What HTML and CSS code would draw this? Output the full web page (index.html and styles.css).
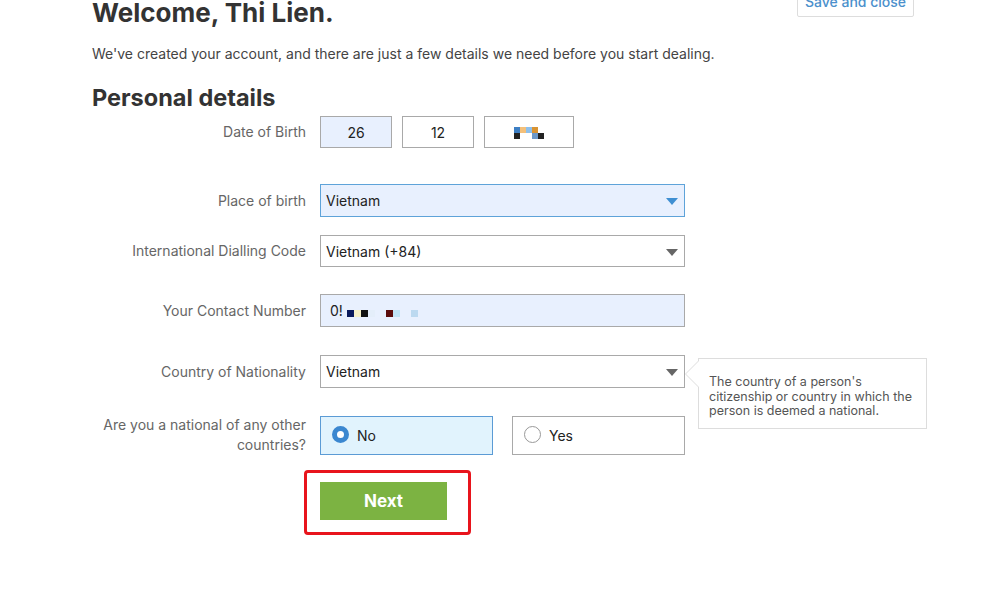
FILE: index.html
```html
<!DOCTYPE html>
<html lang="en">
<head>
<meta charset="utf-8">
<title>Personal details</title>
<link rel="stylesheet" href="styles.css">
</head>
<body>
<div class="page">
  <header class="top">
    <h1 class="title">Welcome, Thi Lien.</h1>
    <button class="save-btn">Save and close</button>
  </header>
  <p class="intro">We've created your account, and there are just a few details we need before you start dealing.</p>
  <h2 class="section">Personal details</h2>

  <div class="form">
    <div class="row row-dob">
      <div class="label">Date of Birth</div>
      <div class="control dob">
        <div class="box box-day">26</div>
        <div class="box">12</div>
        <div class="box box-year">
          <span class="px-grid">
            <span class="px" style="background:#3d7fc4"></span><span class="px" style="background:#f4c07a"></span><span class="px" style="background:#8ec0ec"></span><span class="px" style="background:#d99432"></span><span class="px px-empty"></span>
            <span class="px" style="background:#222"></span><span class="px px-empty"></span><span class="px px-empty"></span><span class="px" style="background:#6c98c8"></span><span class="px" style="background:#222"></span>
          </span>
        </div>
      </div>
    </div>

    <div class="row row-place">
      <div class="label">Place of birth</div>
      <div class="control">
        <div class="select select-active">Vietnam<span class="arrow arrow-blue"></span></div>
      </div>
    </div>

    <div class="row row-code">
      <div class="label">International Dialling Code</div>
      <div class="control">
        <div class="select select-short">Vietnam (+84)<span class="arrow"></span></div>
      </div>
    </div>

    <div class="row">
      <div class="label">Your Contact Number</div>
      <div class="control">
        <div class="select select-filled">0!<span class="phone-px"><span class="px" style="background:#0a1a5c"></span><span class="px" style="background:#f6f0c8"></span><span class="px" style="background:#111"></span><span class="px" style="background:#e4eefa"></span><span class="px px-gap" style="background:#5a0c0c"></span><span class="px" style="background:#bfe3f6"></span><span class="px px-gap" style="background:#bcd9f0"></span></span></div>
      </div>
    </div>

    <div class="row row-nat">
      <div class="label">Country of Nationality</div>
      <div class="control control-tip">
        <div class="select">Vietnam<span class="arrow"></span></div>
        <div class="tooltip">The country of a person's citizenship or country in which the person is deemed a national.</div>
      </div>
    </div>

    <div class="row row-radio">
      <div class="label label-multi">Are you a national of any other countries?</div>
      <div class="control radios">
        <div class="radio radio-on"><span class="dot dot-on"></span>No</div>
        <div class="radio"><span class="dot"></span>Yes</div>
      </div>
    </div>

    <div class="next-wrap">
      <button class="next-btn">Next</button>
    </div>
  </div>
</div>
</body>
</html>
```

FILE: styles.css
```css
* { box-sizing: border-box; }

body {
  margin: 0;
  background: #ffffff;
  font-family: "Inter", "Noto Sans", "Liberation Sans", sans-serif;
  color: #333;
}

.page {
  padding-left: 92px;
  width: 914px;
}

.top {
  display: flex;
  justify-content: space-between;
  align-items: flex-start;
}

.title {
  margin: 0;
  font-size: 26px;
  line-height: 26px;
  font-weight: 700;
  color: #333;
}

.save-btn {
  margin-top: -13px;
  width: 117px;
  height: 30px;
  background: #fff;
  border: 1px solid #ddd;
  border-radius: 2px;
  color: #4b90cc;
  font-family: inherit;
  font-size: 14px;
  font-weight: 500;
  line-height: 20px;
  padding: 0;
}

.intro {
  margin: 20px 0 0;
  font-size: 14px;
  line-height: 16px;
  color: #444;
}

.section {
  margin: 21px 0 0;
  font-size: 23.5px;
  line-height: 30px;
  font-weight: 700;
  color: #333;
}

.form {
  display: flex;
  flex-direction: column;
}

.row {
  display: flex;
  align-items: center;
  gap: 14px;
  margin-top: 27px;
}

.row-dob { margin-top: 3px; }
.row-place { margin-top: 36px; }
.row-code { margin-top: 18px; }
.row-nat { margin-top: 28px; }
.row-radio { margin-top: 27px; }

.label {
  width: 214px;
  flex: none;
  text-align: right;
  font-size: 14px;
  line-height: 20px;
  color: #666;
}

.label-multi { padding-left: 6px; }

.control {
  display: flex;
  align-items: center;
}

.dob { gap: 10px; }

.box {
  width: 72px;
  height: 32px;
  border: 1px solid #a9a9a9;
  display: flex;
  align-items: center;
  justify-content: center;
  font-size: 14px;
  color: #222;
}

.box-day { background: #e8f0fe; }
.box-year { width: 90px; }

.px-grid {
  display: grid;
  grid-template-columns: repeat(5, 6px);
  grid-template-rows: 6px 6px;
  margin-top: 2px;
}

.px { display: inline-block; width: 6px; height: 6px; }
.px-empty { background: transparent; }

.select {
  position: relative;
  width: 365px;
  height: 33px;
  border: 1px solid #a9a9a9;
  background: #fff;
  padding-left: 5px;
  display: flex;
  align-items: center;
  font-size: 14px;
  color: #222;
}

.select-short { height: 32px; }

.select-active {
  background: #e8f0fe;
  border-color: #5ea3d9;
}

.select-filled {
  background: #e8f0fe;
  padding-left: 9px;
}

.phone-px {
  display: flex;
  align-items: center;
  margin-left: 4px;
  margin-top: 6px;
}

.phone-px .px { width: 7px; height: 7px; }
.phone-px .px-gap { margin-left: 11px; }

.arrow {
  position: absolute;
  right: 6px;
  top: 13px;
  width: 0;
  height: 0;
  border-left: 6px solid transparent;
  border-right: 6px solid transparent;
  border-top: 7px solid #666;
}

.arrow-blue { border-top-color: #3f8fd2; }

.control-tip { position: relative; }

.tooltip {
  position: absolute;
  left: 378px;
  top: 3px;
  width: 229px;
  padding: 16px 14px 9px 10px;
  background: #fff;
  border: 1px solid #ddd;
  font-size: 12.5px;
  line-height: 14.5px;
  color: #555;
}

.tooltip::before {
  content: "";
  position: absolute;
  left: -14px;
  top: 1px;
  width: 0;
  height: 0;
  border-top: 14px solid transparent;
  border-bottom: 14px solid transparent;
  border-right: 14px solid #ddd;
}

.tooltip::after {
  content: "";
  position: absolute;
  left: -13px;
  top: 2px;
  width: 0;
  height: 0;
  border-top: 13px solid transparent;
  border-bottom: 13px solid transparent;
  border-right: 13px solid #fff;
}

.radios { gap: 19px; }

.radio {
  width: 173px;
  height: 39px;
  border: 1px solid #a9a9a9;
  background: #fff;
  display: flex;
  align-items: center;
  padding-left: 11px;
  gap: 8px;
  font-size: 14px;
  color: #222;
}

.radio-on {
  background: #e1f3fd;
  border-color: #5b9bd5;
}

.dot {
  width: 17px;
  height: 17px;
  border-radius: 50%;
  border: 1px solid #999;
  background: #fff;
  margin-top: -2px;
}

.dot-on {
  border: 5px solid #3b87d0;
}

.next-wrap {
  align-self: flex-start;
  margin-left: 212px;
  margin-top: 15px;
  padding: 9px 21px 12px 13px;
  border: 3px solid #e8141c;
  border-radius: 4px;
}

.next-btn {
  display: block;
  width: 127px;
  height: 38px;
  border: none;
  background: #7cb342;
  color: #fff;
  font-family: inherit;
  font-size: 17px;
  font-weight: 700;
  padding: 0;
}
```
